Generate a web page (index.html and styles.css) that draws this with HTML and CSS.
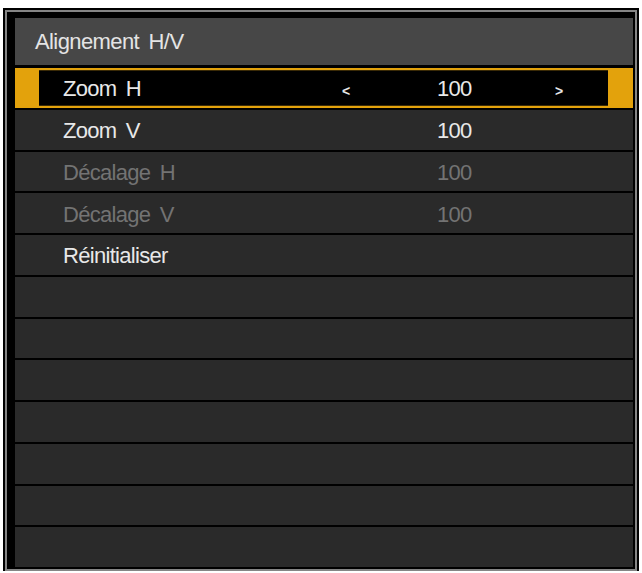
FILE: index.html
```html
<!DOCTYPE html>
<html lang="fr">
<head>
    <meta charset="UTF-8">
    <title>Alignement H/V</title>
    <link rel="stylesheet" href="styles.css">
</head>
<body>
    <div class="frame">
        <div class="ring">
            <div class="panel">
                <div class="title">Alignement H/V</div>
                <div class="menu">
                    <div class="row selected">
                        <div class="inner">
                            <span class="label">Zoom H</span>
                            <span class="arrow">&lt;</span>
                            <span class="value">100</span>
                            <span class="arrow last">&gt;</span>
                        </div>
                    </div>
                    <div class="row">
                        <div class="inner">
                            <span class="label">Zoom V</span>
                            <span class="arrow"></span>
                            <span class="value">100</span>
                        </div>
                    </div>
                    <div class="row disabled">
                        <div class="inner">
                            <span class="label">Décalage H</span>
                            <span class="arrow"></span>
                            <span class="value">100</span>
                        </div>
                    </div>
                    <div class="row disabled">
                        <div class="inner">
                            <span class="label">Décalage V</span>
                            <span class="arrow"></span>
                            <span class="value">100</span>
                        </div>
                    </div>
                    <div class="row">
                        <div class="inner">
                            <span class="label">Réinitialiser</span>
                        </div>
                    </div>
                    <div class="row"></div>
                    <div class="row"></div>
                    <div class="row"></div>
                    <div class="row"></div>
                    <div class="row"></div>
                    <div class="row"></div>
                    <div class="row"></div>
                </div>
            </div>
        </div>
    </div>
</body>
</html>
```

FILE: styles.css
```css
body {
    margin: 0;
    padding: 0;
    background: #fff;
    font-family: "Liberation Sans", Arial, sans-serif;
}
.frame {
    margin: 8px 3px 0 3px;
    border: 2px solid #000;
    border-bottom: 0;
}
.ring {
    border: 2px solid #858585;
}
.panel {
    background: #000;
    padding: 6px 2px 2px 8px;
    display: flex;
    flex-direction: column;
    gap: 3px;
}
.title {
    height: 47px;
    background: #474747;
    color: #e4e4e4;
    font-size: 22px;
    letter-spacing: -0.6px;
    word-spacing: 4px;
    padding-left: 20px;
    display: flex;
    align-items: center;
    padding-top: 1px;
    box-sizing: border-box;
}
.menu {
    height: 499px;
    min-width: 0;
    display: grid;
    grid-template-rows: repeat(12, 1fr);
    grid-template-columns: minmax(0, 1fr);
    gap: 2px;
}
.row {
    background: #2a2a2a;
    color: #e8e8e8;
    font-size: 22px;
    letter-spacing: -0.7px;
    word-spacing: 4px;
    padding-left: 48px;
    display: flex;
    min-width: 0;
}
.row.disabled {
    color: #737373;
}
.row.selected {
    background: #e3a20c;
    padding: 2px 25px 2px 24px;
}
.inner {
    flex: 1;
    display: flex;
    align-items: center;
    padding-top: 3px;
    min-width: 0;
}
.selected .inner {
    background: #000;
    padding-left: 24px;
    border-top: 1px solid #3a2a06;
    border-bottom: 1px solid #3a2a06;
}
.label {
    width: 279px;
    flex-shrink: 0;
}
.arrow {
    width: 95px;
    flex-shrink: 0;
    font-size: 14px;
    font-weight: bold;
    padding-top: 4px;
}
.arrow.last {
    width: auto;
}
.value {
    width: 118px;
    flex-shrink: 0;
}
```
